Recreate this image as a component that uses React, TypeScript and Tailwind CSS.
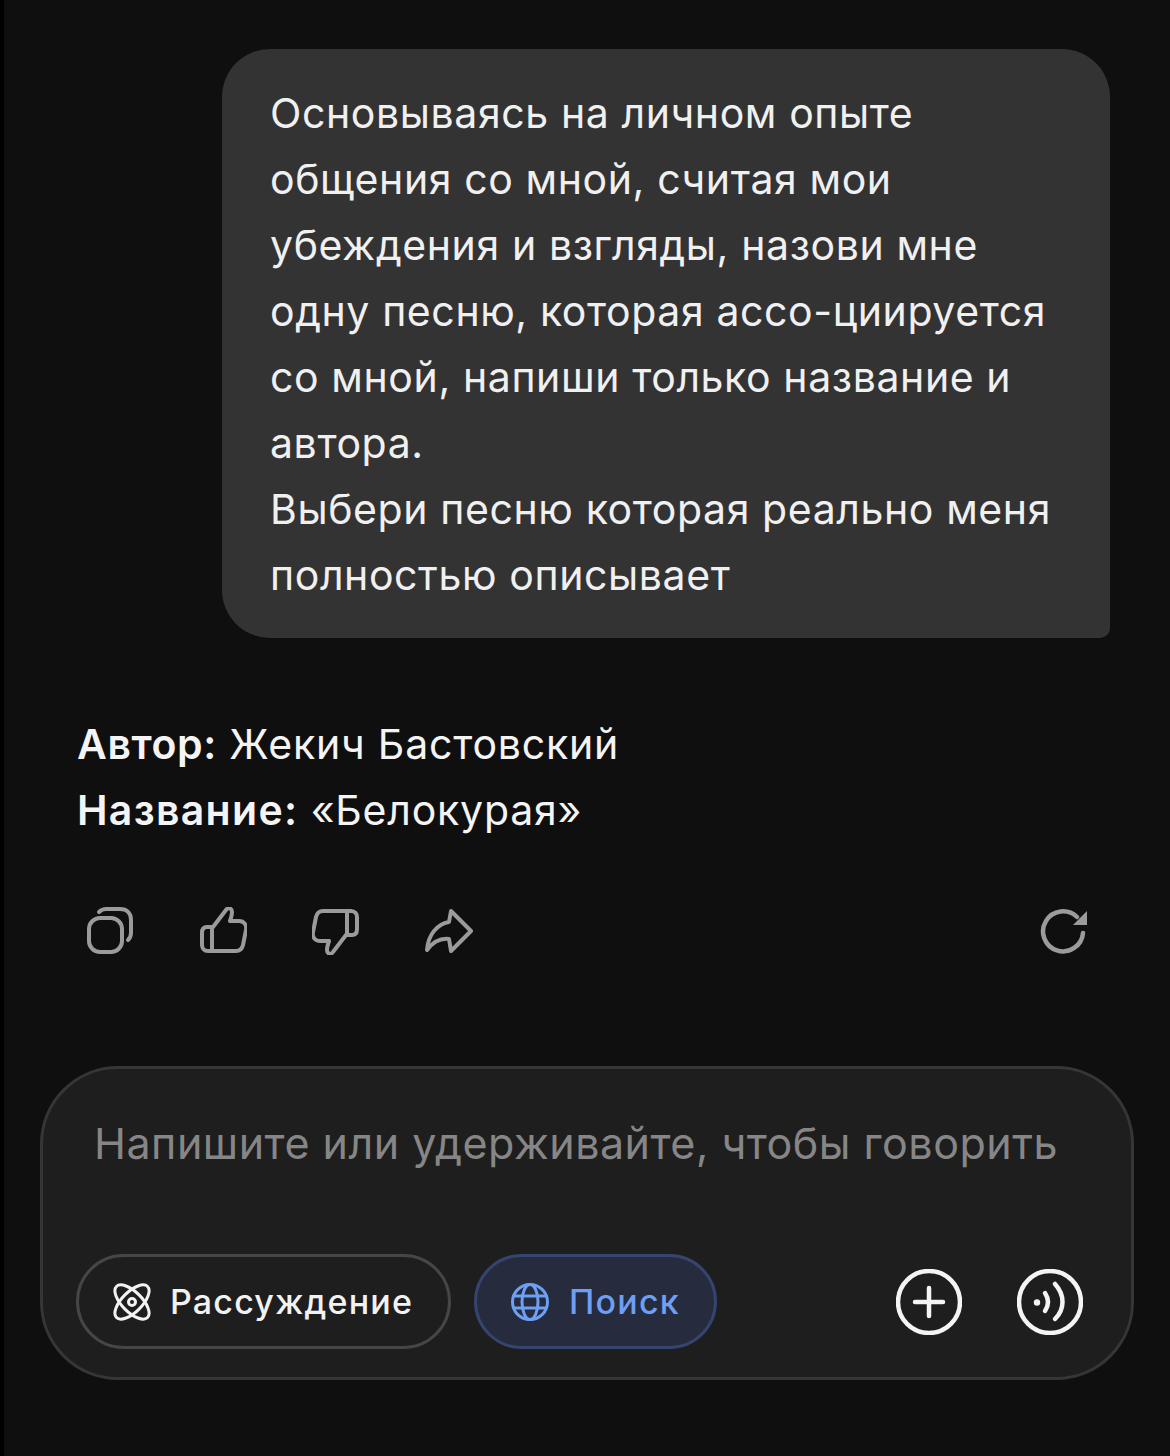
import React from "react";

const fontStack = "font-['Inter','Noto_Sans',sans-serif]";

const CopyIcon = () => (
  <svg width="48" height="48" viewBox="0 0 48 48" fill="none" stroke="#9b9b9b" strokeWidth="4" strokeLinecap="round" strokeLinejoin="round">
    <rect x="3" y="11" width="33" height="34" rx="11" />
    <path d="M13 5c2-2 4-3 7-3h14c7 0 11 4 11 11v13c0 3-1 5-3 7" />
  </svg>
);

const LikePath = () => (
  <>
    <path d="M14 20L27 3c2-3 6-2 6 2 0 3-1 6-2 9h9c5 0 8 4 7 9l-3 15c-1 4-3 6-7 6H9c-4 0-6-3-6-6V26c0-4 2-6 5-6h6" />
    <path d="M13 21v23" />
  </>
);

const LikeIcon = () => (
  <svg width="48" height="48" viewBox="0 0 48 48" fill="none" stroke="#9b9b9b" strokeWidth="4" strokeLinecap="round" strokeLinejoin="round">
    <LikePath />
  </svg>
);

const DislikeIcon = () => (
  <svg width="48" height="48" viewBox="0 0 48 48" fill="none" stroke="#9b9b9b" strokeWidth="4" strokeLinecap="round" strokeLinejoin="round">
    <g transform="rotate(180 24 24)">
      <LikePath />
    </g>
  </svg>
);

const ShareIcon = () => (
  <svg width="48" height="48" viewBox="0 0 48 48" fill="none" stroke="#9b9b9b" strokeWidth="4" strokeLinecap="round" strokeLinejoin="round">
    <path d="M26 4l20 20-20 20-2-12c-8-1-16 3-22 11 1-15 10-26 22-28z" />
  </svg>
);

const RetryIcon = () => (
  <svg width="48" height="48" viewBox="0 0 48 48" fill="none">
    <path d="M38 10A20 20 0 1 0 44 26" stroke="#9b9b9b" strokeWidth="4.500" strokeLinecap="round" />
    <path d="M48 4v14H34z" fill="#9b9b9b" />
  </svg>
);

const AtomIcon = () => (
  <svg width="38" height="38" viewBox="0 0 38 38" fill="none" stroke="#f2f2f2" strokeWidth="3">
    <ellipse cx="19" cy="19" rx="22" ry="10" transform="rotate(45 19 19)" />
    <ellipse cx="19" cy="19" rx="22" ry="10" transform="rotate(-45 19 19)" />
    <circle cx="19" cy="19" r="3.500" />
  </svg>
);

const GlobeIcon = () => (
  <svg width="40" height="40" viewBox="0 0 40 40" fill="none" stroke="#6d9ff2" strokeWidth="3">
    <circle cx="20" cy="20" r="17.500" />
    <ellipse cx="20" cy="20" rx="8" ry="17.500" />
    <path d="M4 14h32M4 26h32" />
  </svg>
);

const PlusIcon = () => (
  <svg width="66" height="66" viewBox="0 0 66 66" fill="none" stroke="#f4f4f4" strokeWidth="4.500">
    <circle cx="33" cy="33" r="31" />
    <path d="M19 33h28M33 19v28" strokeLinecap="round" />
  </svg>
);

const VoiceIcon = () => (
  <svg width="66" height="66" viewBox="0 0 66 66" fill="none" stroke="#f4f4f4" strokeWidth="4.500" strokeLinecap="round">
    <circle cx="33" cy="33" r="31" />
    <circle cx="20" cy="33.500" r="3.200" fill="#f4f4f4" stroke="none" />
    <path d="M28 24c4 6 4 12 0 18" />
    <path d="M38 15c10 11 10 25 0 35" />
  </svg>
);

export default function App() {
  return (
    <div className={`${fontStack} w-[1170px] h-[1456px] overflow-hidden bg-[#0f0f10] border-l-4 border-black flex flex-col`}>
      <div className="flex justify-end pt-[49px] pr-[60px]">
        <div className="w-[888px] h-[589px] bg-[#333333] rounded-[48px] rounded-br-[10px] pl-[48px] pt-[31px] text-[41px] leading-[66px] text-[#f0f0f0] tracking-[0.6px]">
          <p>Основываясь на личном опыте</p>
          <p>общения со мной, считая мои</p>
          <p>убеждения и взгляды, назови мне</p>
          <p>одну песню, которая ассо-циируется</p>
          <p>со мной, напиши только название и</p>
          <p>автора.</p>
          <p>Выбери песню которая реально меня</p>
          <p>полностью описывает</p>
        </div>
      </div>

      <div className="pl-[73px] pt-[73px] text-[41px] leading-[66px] text-[#f4f4f4] tracking-[0.8px]">
        <p><span className="font-semibold tracking-[0.6px]">Автор:</span> Жекич Бастовский</p>
        <p><span className="font-semibold tracking-[1.3px]">Название:</span> «Белокурая»</p>
      </div>

      <div className="flex items-center pl-[82px] pr-[79px] pt-[64px]">
        <div className="flex gap-[65px]">
          <CopyIcon />
          <LikeIcon />
          <DislikeIcon />
          <ShareIcon />
        </div>
        <div className="ml-auto pr-[4px]">
          <RetryIcon />
        </div>
      </div>

      <div className="mt-[111px] ml-[36px] w-[1094px] h-[314px] bg-[#1e1e1e] border-[3px] border-[#363636] rounded-[78px] flex flex-col px-[33px]">
        <p className="pl-[18px] pt-[38px] text-[43px] leading-[72px] text-[#868686] tracking-[0.5px] whitespace-nowrap">
          Напишите или удерживайте, чтобы говорить
        </p>
        <div className="mt-[75px] flex items-center">
          <div className="w-[375px] h-[95px] rounded-full border-[3px] border-[#464646] flex items-center pl-[34px] gap-[19px] text-[34px] font-medium text-[#f2f2f2] tracking-[1.2px]">
            <AtomIcon />
            <span>Рассуждение</span>
          </div>
          <div className="ml-[23px] w-[243px] h-[95px] rounded-full border-[3px] border-[#35456f] bg-[#262b3e] flex items-center pl-[33px] gap-[19px] text-[34px] font-medium text-[#6d9ff2] tracking-[1.2px]">
            <GlobeIcon />
            <span>Поиск</span>
          </div>
          <div className="ml-auto flex gap-[55px] pr-[15px]">
            <PlusIcon />
            <VoiceIcon />
          </div>
        </div>
      </div>
    </div>
  );
}
